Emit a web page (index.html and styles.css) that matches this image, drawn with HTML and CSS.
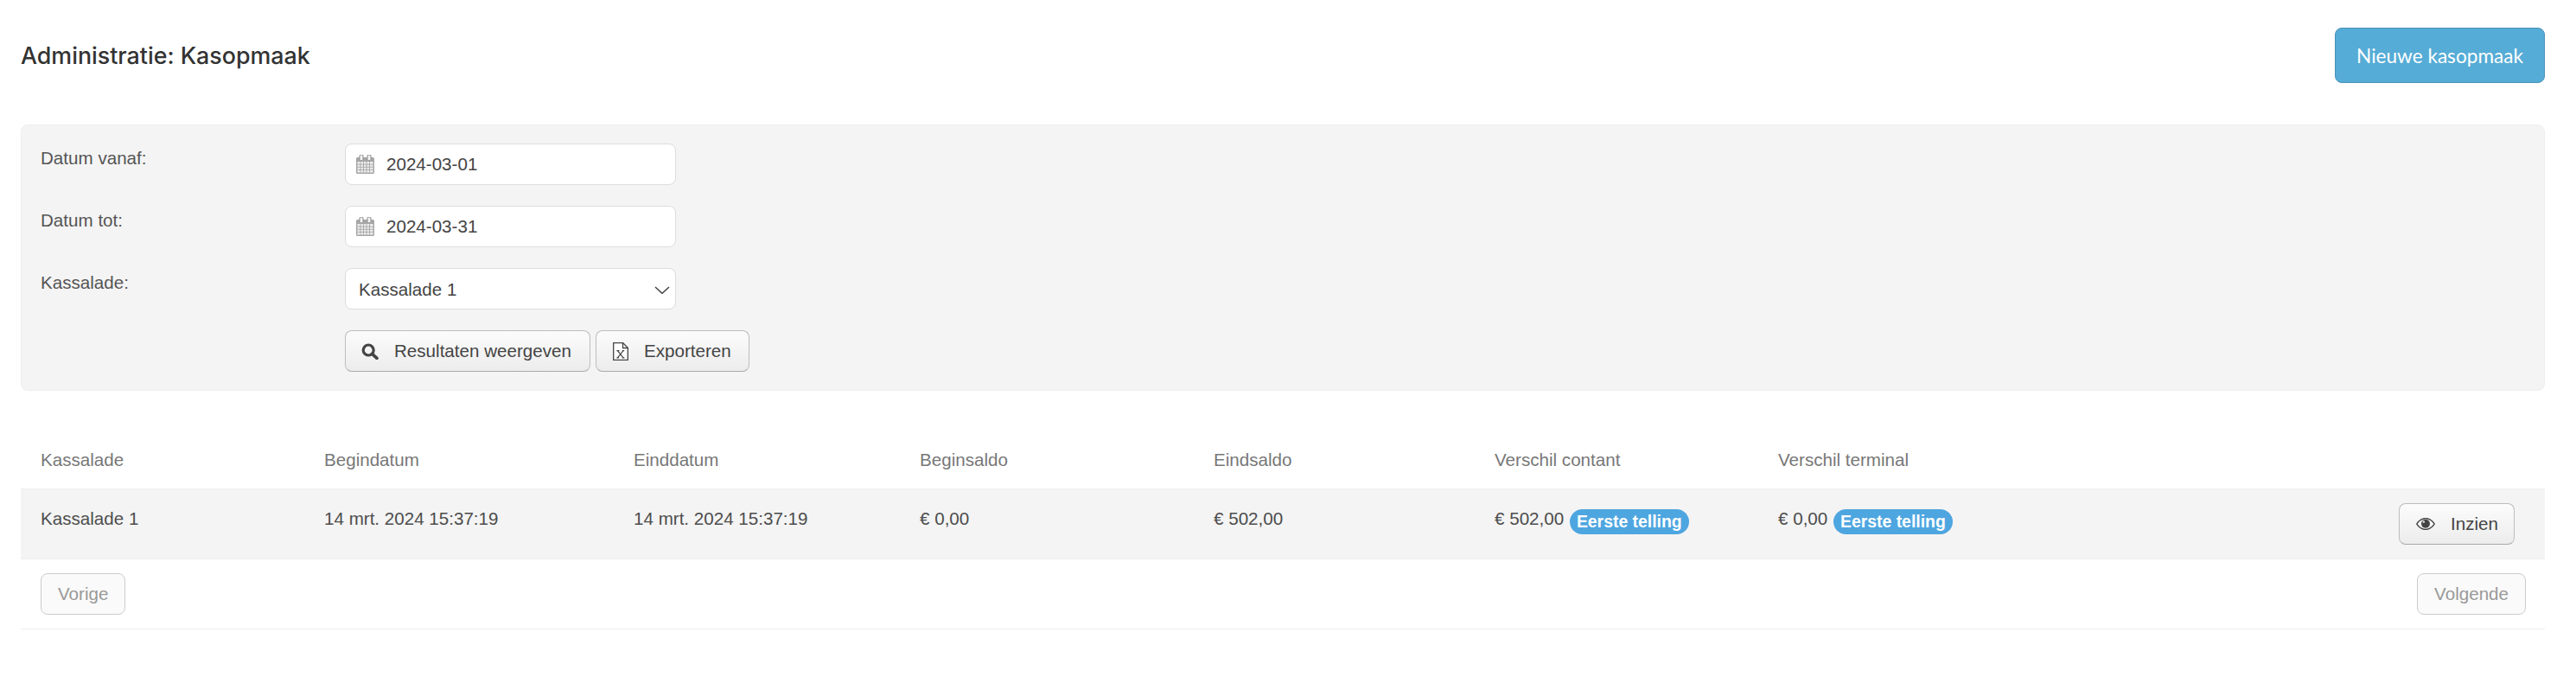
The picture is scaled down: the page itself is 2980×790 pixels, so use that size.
FILE: index.html
```html
<!DOCTYPE html>
<html lang="nl">
<head>
<meta charset="utf-8">
<title>Administratie: Kasopmaak</title>
<link rel="stylesheet" href="styles.css">
</head>
<body>
<main class="page">
  <header class="top">
    <h1 class="title">Administratie: Kasopmaak</h1>
    <button class="btn-primary" type="button">Nieuwe kasopmaak</button>
  </header>

  <form class="filter">
    <div class="field">
      <label class="field-label">Datum vanaf:</label>
      <div class="control">
        <svg class="cal" viewBox="0 0 21 22"><use href="#cal"/></svg>
        <input class="date" type="text" value="2024-03-01">
      </div>
    </div>
    <div class="field">
      <label class="field-label">Datum tot:</label>
      <div class="control">
        <svg class="cal" viewBox="0 0 21 22"><use href="#cal"/></svg>
        <input class="date" type="text" value="2024-03-31">
      </div>
    </div>
    <div class="field">
      <label class="field-label">Kassalade:</label>
      <div class="control select-wrap">
        <select class="select"><option>Kassalade 1</option></select>
        <svg class="chev" viewBox="0 0 18 9"><path d="M1 1l8 7.300 8-7.300" fill="none" stroke="#444" stroke-width="1.5"/></svg>
      </div>
    </div>
    <div class="actions">
      <button class="btn btn-search" type="button">
        <svg class="i-search" viewBox="0 0 20 19"><circle cx="8.2" cy="8" r="6" fill="none" stroke="#444" stroke-width="3.2"/><path d="M12.6 12.4l5.4 5" stroke="#444" stroke-width="3.6" stroke-linecap="round"/></svg>
        Resultaten weergeven
      </button>
      <button class="btn btn-export" type="button">
        <svg class="i-file" viewBox="0 0 18 21"><path d="M.7.7h11l5.6 5.6v14H.7z" fill="#fff" stroke="#444" stroke-width="1.3"/><path d="M11.5.7v5.800h5.800" fill="none" stroke="#444" stroke-width="1.3"/><path d="M5.400 9.600l6.600 8.200M12 9.600l-6.600 8.200M4.400 9.600h3M10.800 9.600h2.400M4.400 17.800h2.600M10.800 17.800h2.600" fill="none" stroke="#444" stroke-width="1.2"/></svg>
        Exporteren
      </button>
    </div>
  </form>

  <table class="list">
    <thead>
      <tr>
        <th class="c1">Kassalade</th>
        <th class="c2">Begindatum</th>
        <th class="c3">Einddatum</th>
        <th class="c4">Beginsaldo</th>
        <th class="c5">Eindsaldo</th>
        <th class="c6">Verschil contant</th>
        <th class="c7">Verschil terminal</th>
        <th></th>
      </tr>
    </thead>
    <tbody>
      <tr class="row">
        <td>Kassalade 1</td>
        <td>14 mrt. 2024 15:37:19</td>
        <td>14 mrt. 2024 15:37:19</td>
        <td>€ 0,00</td>
        <td>€ 502,00</td>
        <td>€ 502,00 <span class="badge">Eerste telling</span></td>
        <td>€ 0,00 <span class="badge">Eerste telling</span></td>
        <td class="cell-action">
          <button class="btn btn-view" type="button">
            <svg class="i-eye" viewBox="0 0 22 14"><path fill-rule="evenodd" fill="#444" d="M11 0c4.600 0 8.500 2.700 11 7-2.500 4.300-6.400 7-11 7S2.500 11.300 0 7c2.500-4.300 6.400-7 11-7zM11 1.300C7.400 1.300 4 3.400 1.600 7c2.400 3.600 5.800 5.700 9.400 5.700s7-2.100 9.400-5.700C18 3.400 14.600 1.300 11 1.300z"/><circle cx="11" cy="6.800" r="5" fill="#444"/><circle cx="8.800" cy="4.600" r="1.300" fill="#ddd"/></svg>
            Inzien
          </button>
        </td>
      </tr>
    </tbody>
  </table>

  <nav class="pager">
    <button class="btn-off" type="button">Vorige</button>
    <button class="btn-off" type="button">Volgende</button>
  </nav>
</main>

<svg class="defs" width="0" height="0">
  <symbol id="cal" viewBox="0 0 21 22">
    <path d="M1.500 3h18a1.500 1.500 0 0 1 1.500 1.500V20.500a1.500 1.500 0 0 1-1.500 1.500h-18A1.500 1.500 0 0 1 0 20.500V4.500A1.500 1.500 0 0 1 1.500 3z" fill="#a6a6a6"/>
    <path d="M1.500 8h18v12.500h-18z" fill="#eee"/>
    <path d="M1.500 11.200h18M1.500 14.300h18M1.500 17.400h18M5 8v12.500M8.500 8v12.500M12 8v12.500M15.500 8v12.500" stroke="#a6a6a6" stroke-width=".9"/>
    <path d="M4 6V2a2 2 0 0 1 4 0v4M13 6V2a2 2 0 0 1 4 0v4" fill="#f4f4f4" stroke="#999" stroke-width="1.200"/>
  </symbol>
</svg>
</body>
</html>
```

FILE: styles.css
```css
html, body { margin: 0; padding: 0; background: #fff; }
body { font-family: "Liberation Sans", Arial, sans-serif; font-size: 20.6px; color: #4d4d4d; }
.defs { position: absolute; }

.page { width: 2920px; padding: 32px 36px 0 24px; }

.top { display: flex; justify-content: space-between; align-items: center; height: 64px; margin-bottom: 48px; }
.title { margin: 0; font-family: Inter, sans-serif; font-size: 26.8px; font-weight: 500; color: #333; }
.btn-primary {
  box-sizing: border-box; width: 243px; height: 64px; padding: 0;
  background: #55acd6; border: 1px solid #4a91b6; border-radius: 8px;
  color: #fff; font-family: Lato, sans-serif; font-size: 22.6px;
}

.filter {
  box-sizing: border-box; height: 308px; padding: 21px 22px 0;
  background: #f4f4f4; border: 1px solid #eeeeee; border-radius: 8px;
}
.field { display: flex; height: 48px; margin-bottom: 24px; }
.field-label { width: 352px; padding-top: 6px; line-height: 22px; color: #555; }
.control {
  box-sizing: border-box; display: flex; align-items: center; gap: 14px;
  width: 383px; height: 48px; padding-left: 12px;
  background: #fff; border: 1px solid #ddd; border-radius: 8px;
}
.cal { width: 21px; height: 22px; }
.date { flex: 1; min-width: 0; padding: 0; border: 0; outline: 0; background: none; font: inherit; color: #444; }
.select-wrap { position: relative; padding-left: 0; }
.select {
  width: 100%; height: 100%; padding: 0 0 0 15px;
  border: 0; outline: 0; background: none; font: inherit; color: #444;
  appearance: none; -webkit-appearance: none;
}
.chev { position: absolute; right: 6px; top: 20px; width: 18px; height: 9px; }

.actions { display: flex; gap: 6px; margin-left: 352px; }
.btn {
  box-sizing: border-box; display: flex; align-items: center; height: 48px; padding: 0;
  background: linear-gradient(#fcfcfc, #ececec);
  border: 1px solid #bdbdbd; border-bottom-color: #a9a9a9; border-radius: 8px;
  font: inherit; color: #444;
}
.btn-search { width: 284px; padding-left: 18px; gap: 18px; }
.i-search { width: 20px; height: 19px; }
.btn-export { width: 178px; padding-left: 19px; gap: 18px; }
.i-file { width: 18px; height: 21px; }

.list { width: 100%; margin-top: 48px; border-collapse: collapse; table-layout: fixed; }
.list th { box-sizing: border-box; height: 65px; padding: 0 0 0 23px; font-weight: 400; text-align: left; color: #777; vertical-align: middle; }
.list td { height: 81px; padding: 22px 0 0 23px; vertical-align: top; line-height: 24px; box-sizing: border-box; white-space: nowrap; }
.row { background: #f4f4f4; border-top: 1px solid #eee; border-bottom: 1px solid #eee; }
.c1 { width: 328px; }
.c2 { width: 358px; }
.c3 { width: 331px; }
.c4 { width: 340px; }
.c5 { width: 325px; }
.c6 { width: 328px; }
.c7 { width: 640px; }
.badge {
  display: inline-block; height: 29px; padding: 0 8px; margin-left: 1px;
  background: #4ea6e0; border-radius: 15px; vertical-align: -3px;
  font-size: 19.4px; font-weight: 700; line-height: 29px; color: #fff;
}
.list .cell-action { padding: 16px 35px 0 0; }
.btn-view { width: 134px; margin-left: auto; padding-left: 19px; gap: 18px; }
.i-eye { width: 22px; height: 14px; }

.pager {
  box-sizing: border-box; display: flex; justify-content: space-between; align-items: flex-start;
  height: 81px; padding: 16px 22px 0 23px; border-bottom: 1px solid #eee;
}
.btn-off {
  box-sizing: border-box; height: 48px; padding: 0 19px;
  background: #fafafa; border: 1px solid #ccc; border-radius: 8px;
  font: inherit; color: #999;
}
```
